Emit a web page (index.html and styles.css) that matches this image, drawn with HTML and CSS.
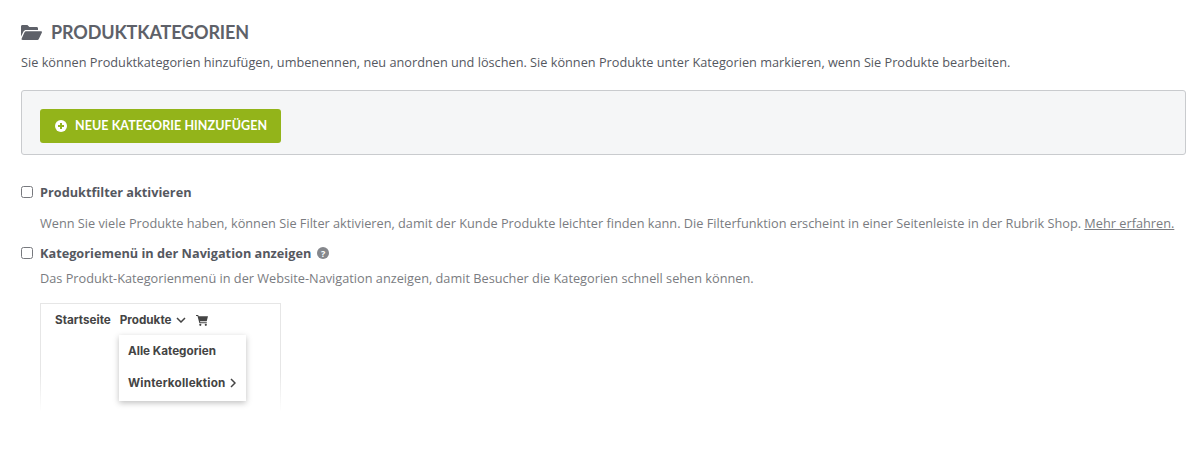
FILE: index.html
```html
<!DOCTYPE html>
<html lang="de">
<head>
<meta charset="utf-8">
<title>Produktkategorien</title>
<link rel="stylesheet" href="styles.css">
</head>
<body>
<main class="page">
  <h1 class="title">
    <svg class="folder" viewBox="0 0 21 15" aria-hidden="true"><path d="M0 1.500C0 .7.600 0 1.400 0h5l2 2h7.200c.8 0 1.400.6 1.400 1.400V5H5.200C4 5 3 5.600 2.500 6.600L0 11.500z"/><path d="M5.200 6.200H20c.8 0 1.200.8.800 1.500l-3 6.200c-.3.700-1 1.100-1.800 1.100H1.500c-.8 0-1.200-.8-.8-1.500l2.800-6.200c.3-.7 1-1.100 1.700-1.100z"/></svg>
    <span>PRODUKTKATEGORIEN</span>
  </h1>
  <p class="intro">Sie können Produktkategorien hinzufügen, umbenennen, neu anordnen und löschen. Sie können Produkte unter Kategorien markieren, wenn Sie Produkte bearbeiten.</p>
  <section class="panel">
    <button class="add" type="button">
      <svg class="plus" viewBox="0 0 12 12" aria-hidden="true"><circle cx="6" cy="6" r="6" fill="#fff"/><path d="M6 3v6M3 6h6" stroke="#93b41a" stroke-width="2"/></svg>
      <span>NEUE KATEGORIE HINZUFÜGEN</span>
    </button>
  </section>
  <div class="option first">
    <label class="check"><span class="box"></span><strong>Produktfilter aktivieren</strong></label>
    <p class="help">Wenn Sie viele Produkte haben, können Sie Filter aktivieren, damit der Kunde Produkte leichter finden kann. Die Filterfunktion erscheint in einer Seitenleiste in der Rubrik Shop. <a href="#">Mehr erfahren.</a></p>
  </div>
  <div class="option second">
    <label class="check"><span class="box"></span><strong>Kategoriemenü in der Navigation anzeigen</strong><span class="q">?</span></label>
    <p class="help tight">Das Produkt-Kategorienmenü in der Website-Navigation anzeigen, damit Besucher die Kategorien schnell sehen können.</p>
  </div>
  <div class="preview">
    <nav class="nav">
      <span>Startseite</span>
      <span class="prod">Produkte
        <svg class="chev" viewBox="0 0 10 6" aria-hidden="true"><path d="M1 1l4 4 4-4" fill="none" stroke="#444" stroke-width="1.500"/></svg>
      </span>
      <svg class="cart" viewBox="0 0 12 11" aria-hidden="true"><path d="M0 0h2.200l.4 1.300H12l-1.300 4.900H4l.3 1.100h6.500v1H3.400L1.500 1H0z"/><circle cx="4.300" cy="9.800" r="1.100"/><circle cx="9.800" cy="9.800" r="1.100"/></svg>
    </nav>
    <div class="menu">
      <div>Alle Kategorien</div>
      <div class="row"><span class="wide">Winterkollektion</span>
        <svg class="next" viewBox="0 0 6 10" aria-hidden="true"><path d="M1 1l4 4-4 4" fill="none" stroke="#444" stroke-width="1.500"/></svg>
      </div>
    </div>
  </div>
</main>
</body>
</html>
```
FILE: styles.css
```css
* { box-sizing: border-box; }
html, body { margin: 0; background: #fff; }
body { font-family: "Open Sans", "Liberation Sans", sans-serif; height: 466px; overflow: hidden; }
.page { padding: 21px 14px 0 21px; }
.title { display: flex; align-items: center; gap: 9px; margin: 0; height: 22px; color: #5e6169; font: 700 18px/22px Lato, sans-serif; letter-spacing: -.15px; }
.folder { width: 21px; height: 15px; fill: #5e6169; }
.intro { margin: 9px 0 0; color: #55585f; font-size: 12.73px; line-height: 20px; white-space: nowrap; }
.panel { margin-top: 18px; height: 65px; padding: 18px; background: #f5f6f7; border: 1px solid #c9cbce; border-radius: 3px; }
.add { display: flex; align-items: center; gap: 8px; width: 241px; height: 34px; padding: 0 14px 0 15px; border: 0; border-radius: 3px; background: #93b41a; color: #fff; font: 700 12.5px/34px Lato, sans-serif; letter-spacing: .07px; white-space: nowrap; }
.plus { width: 12px; height: 12px; flex: none; }
.option.first { margin-top: 28px; }
.option.second { margin-top: 11px; }
.check { display: flex; align-items: center; height: 18px; color: #55585f; font-size: 12.73px; }
.box { width: 12px; height: 12px; margin-right: 7px; border: 1.500px solid #77797e; border-radius: 2.500px; background: #fff; flex: none; }
.check strong { font-weight: 700; }
.q { display: grid; place-items: center; width: 12px; height: 12px; margin-left: 6px; border-radius: 50%; background: #85878c; color: #fff; font-size: 9px; font-weight: 700; line-height: 1; }
.help { margin: 12px 0 0 19px; color: #7a7c81; font-size: 12.74px; line-height: 20px; white-space: nowrap; }
.help.tight { margin-top: 6px; }
.help a { color: #7a7c81; text-decoration: underline; }
.preview { position: relative; width: 241px; height: 108px; margin: 15px 0 0 19px; border: 1px solid; border-image: linear-gradient(#e6e6e6 65%, #fff) 1; border-bottom: 0; color: #444; font: 700 11.7px/14px Inter, sans-serif; }
.nav { display: flex; align-items: center; gap: 9px; padding: 9px 0 0 14px; }
.prod { display: flex; align-items: center; gap: 4px; }
.chev { width: 10px; height: 6px; }
.cart { width: 12px; height: 11px; margin-left: 1px; fill: #444; }
.menu { position: absolute; left: 78px; top: 31px; width: 127px; height: 66px; padding: 9px 9px; background: #fff; box-shadow: 0 2px 6px rgba(0,0,0,.25); display: flex; flex-direction: column; gap: 18px; }
.row { display: flex; align-items: center; gap: 4px; }
.wide { letter-spacing: .2px; }
.next { width: 6px; height: 10px; }
```
